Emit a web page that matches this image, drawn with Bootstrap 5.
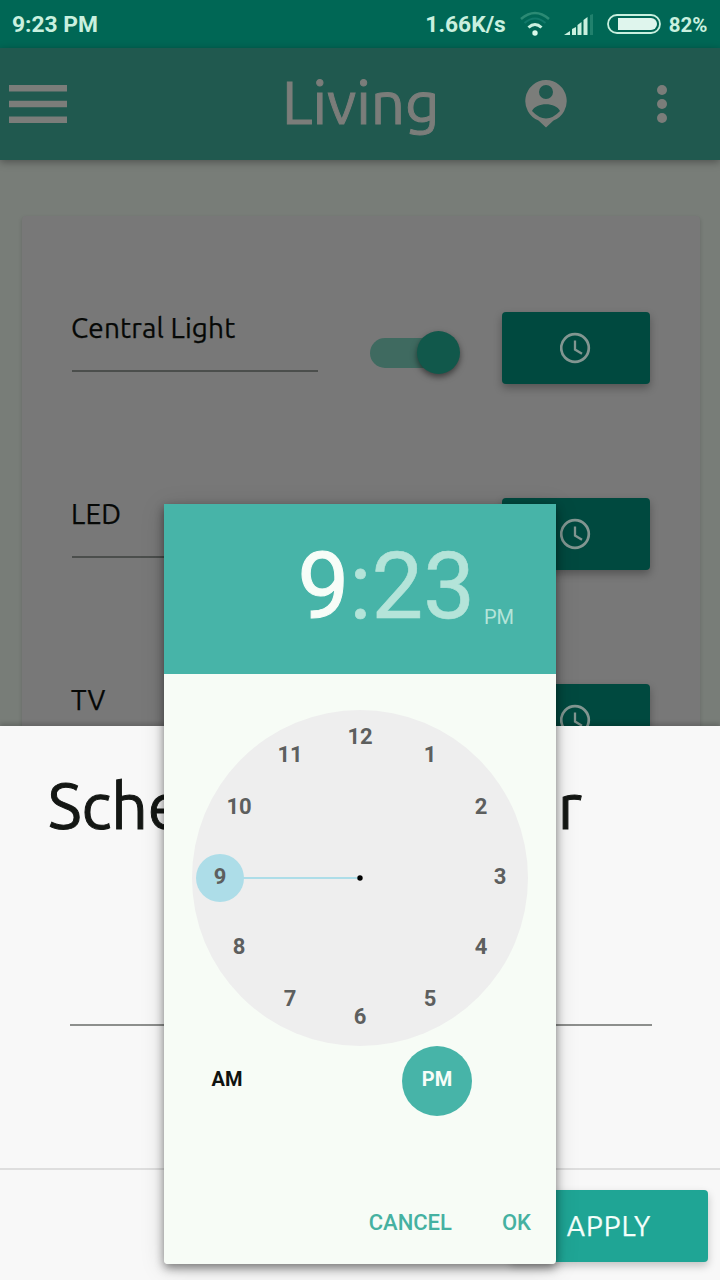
<!DOCTYPE html>
<html lang="en">
<head>
<meta charset="utf-8">
<meta name="viewport" content="width=device-width, initial-scale=1">
<title>Living</title>
<link href="https://cdn.jsdelivr.net/npm/bootstrap@5.3.0/dist/css/bootstrap.min.css" rel="stylesheet">
<style>
body{background:#787d78;font-family:Ubuntu,"Noto Sans",sans-serif;color:#060806;overflow:hidden}
.screen{width:720px;height:1280px}
.statusbar{height:48px;background:#006755;color:#c9f0df;font:700 22.800px/1 Roboto,sans-serif;padding:2px 12.500px 0 12px}
.battery-level{font-size:20.500px;margin-left:8px}
.icon-wifi{margin:-6px 0 0 9px}
.icon-signal{margin-left:8px}
.icon-battery{margin:-3px 0 0 13px}
.appbar{height:112px;background:#20594f;color:#7b7d7a;padding:0;box-shadow:0 2px 8px rgba(0,0,0,.35)}
.menu-icon{margin-left:9px}
.app-title{font-size:60px;line-height:1;margin-left:215px;width:156px;white-space:nowrap;margin-top:-5px;-webkit-text-stroke:1px currentColor}
.icon-person{margin-left:87px}
.icon-more{margin-left:90px}
.room{margin:56px 20px 0 22px;height:524px;background:#787878;border-radius:4px;box-shadow:0 2px 4px rgba(0,0,0,.17);padding:96px 50px 0}
.device{height:186px}
.device-name{width:246px;height:60px;border-bottom:2px solid #4b4e4c;font-size:28px;letter-spacing:.15px;line-height:1;padding-top:2px;text-indent:-1px;white-space:nowrap;-webkit-text-stroke:.25px currentColor}
.toggle{width:90px;height:44px;margin-left:52px;margin-top:19px}
.track{position:absolute;left:0;top:7px;width:80px;height:30px;border-radius:15px;background:#3f6a60}
.thumb{position:absolute;right:0;top:0;width:43px;height:43px;border-radius:50%;background:#11584b;box-shadow:0 3px 6px rgba(0,0,0,.5)}
.btn-clock{width:148px;height:72px;margin-left:42px;background:#00493f;border:0;border-radius:4px;box-shadow:0 4px 8px rgba(0,0,0,.3);color:#829691}
.sheet{left:0;top:726px;width:720px;height:554px;background:#f8f8f8;box-shadow:0 -3px 4px rgba(0,0,0,.15)}
.sheet-body{height:442px;padding:44px 48px 0}
.sheet-title{font-size:64px;line-height:1.1;color:#141714;white-space:nowrap;margin:0;height:254px;padding-right:90px;-webkit-text-stroke:1px currentColor}
.sheet-line{height:2px;background:#8d8f8d;margin:0 20px 0 22px}
.sheet-foot{border-top:2px solid #dedede;height:112px;padding:20px 12px 0}
.btn-apply{width:198px;height:72px;background:#1fa595;color:#f4fffb;border:0;border-radius:4px;font-size:28px;letter-spacing:1px;box-shadow:0 4px 8px rgba(0,0,0,.22);padding:0;-webkit-text-stroke:.25px currentColor}
.picker{left:164px;top:504px;width:392px;height:760px;background:#f7fcf6;border-radius:0 0 4px 4px;overflow:hidden;font-family:Roboto,sans-serif}
.picker-shadow{left:164px;top:504px;width:392px;height:760px;border-radius:0 0 4px 4px;box-shadow:0 4px 10px rgba(0,0,0,.45),0 4px 24px rgba(0,0,0,.15)}
.picker-head{height:170px;background:#47b4a8;color:#b4e4d9;padding:0 42px 0 0}
.time{font-size:92px;line-height:1;margin-top:-4px;-webkit-text-stroke:.6px currentColor}
.hour{color:#f7fdf8;-webkit-text-stroke-width:1px}
.meridiem{font-size:20px;line-height:1;margin-left:9px;margin-bottom:47px}
.dial{width:336px;height:336px;margin:36px auto 0}
.dial text{font:700 22px Roboto,sans-serif;fill:#5d5f5e;text-anchor:middle}
.halves{padding:0 84px 0 28px}
.half{width:70px;height:70px;border-radius:50%;font-size:20px;font-weight:700;line-height:1;padding-bottom:4px;color:#101310}
.half.chosen{background:#47b4a8;color:#f7fdf8}
.actions{font-size:22px;font-weight:500;line-height:1;color:#45b1a1;padding-right:25px;gap:50px;margin-top:96px}
</style>
</head>
<body>
<div class="screen position-relative overflow-hidden">
  <header class="statusbar d-flex align-items-center">
    <span class="me-auto">9:23 PM</span>
    <span>1.66K/s</span>
    <svg class="icon-wifi" width="40" height="30" viewBox="0 0 40 30"><g fill="none"><path d="M6 12Q20 0 34 12" stroke="#2b8a74" stroke-width="2.500"/><path d="M9.500 16Q20 7 30.500 16" stroke="#12796a" stroke-width="2"/><path d="M13.500 20.500Q20 14.500 26.500 20.500" stroke="#c9f0df" stroke-width="3"/></g><circle cx="20" cy="26" r="2.700" fill="#d9faeb"/></svg>
    <svg class="icon-signal" width="31" height="22" viewBox="0 0 31 22"><path d="M1 21l6-4v4zM9 15l4-2v8H9zM14.500 11l4-3v13h-4zM20.500 6l4-3v18h-4z" fill="#c9f0df"/><path d="M27 1l3-1v21h-3z" fill="#21816d"/></svg>
    <svg class="icon-battery" width="54" height="20" viewBox="0 0 54 20"><rect x="1" y="1" width="52" height="18" rx="9" fill="none" stroke="#c9f0df" stroke-width="1.800"/><path d="M11 4h33a6 6 0 010 12H11z" fill="#dff5ed"/></svg>
    <span class="battery-level">82%</span>
  </header>

  <nav class="appbar navbar d-flex flex-nowrap justify-content-start position-relative">
    <svg class="menu-icon" width="58" height="38" viewBox="0 0 58 38"><path d="M0 0h58v6.500H0zM0 15.700h58v6.500H0zM0 31.400h58v6.500H0z" fill="currentColor"/></svg>
    <div class="app-title">Living</div>
    <svg class="icon-person" width="42" height="48" viewBox="0 0 42 48"><path fill="currentColor" fill-rule="evenodd" d="M21 0a21 21 0 0 1 7.500 40.500L21 47.500l-7.500-7A21 21 0 0 1 21 0zm0 5a7 7 0 1 0 0 14 7 7 0 0 0 0-14zM7 31q14 15 28 0c-4-9-24-9-28 0z"/></svg>
    <svg class="icon-more" width="10" height="38" viewBox="0 0 10 38"><g fill="currentColor"><circle cx="5" cy="5" r="5"/><circle cx="5" cy="19" r="5"/><circle cx="5" cy="33" r="5"/></g></svg>
  </nav>

  <main class="room">
    <div class="device d-flex align-items-start">
      <div class="device-name">Central Light</div>
      <div class="toggle position-relative"><div class="track"></div><div class="thumb"></div></div>
      <button class="btn btn-clock d-flex align-items-center justify-content-center" aria-label="Schedule"><svg width="32" height="32" viewBox="0 0 32 32" fill="none" stroke="currentColor"><circle cx="15" cy="16" r="13.800" stroke-width="2.700"/><path d="M15 8.500v9l7 4.200" stroke-width="2.300"/></svg></button>
    </div>
    <div class="device d-flex align-items-start">
      <div class="device-name">LED</div>
      <div class="toggle position-relative"><div class="track"></div><div class="thumb"></div></div>
      <button class="btn btn-clock d-flex align-items-center justify-content-center" aria-label="Schedule"><svg width="32" height="32" viewBox="0 0 32 32" fill="none" stroke="currentColor"><circle cx="15" cy="16" r="13.800" stroke-width="2.700"/><path d="M15 8.500v9l7 4.200" stroke-width="2.300"/></svg></button>
    </div>
    <div class="device d-flex align-items-start">
      <div class="device-name">TV</div>
      <div class="toggle position-relative"><div class="track"></div><div class="thumb"></div></div>
      <button class="btn btn-clock d-flex align-items-center justify-content-center" aria-label="Schedule"><svg width="32" height="32" viewBox="0 0 32 32" fill="none" stroke="currentColor"><circle cx="15" cy="16" r="13.800" stroke-width="2.700"/><path d="M15 8.500v9l7 4.200" stroke-width="2.300"/></svg></button>
    </div>
  </main>

  <section class="sheet position-absolute">
    <div class="sheet-body">
      <h1 class="sheet-title fw-normal d-flex justify-content-between"><span>Sche</span><span>r</span></h1>
      <div class="sheet-line"></div>
    </div>
    <div class="sheet-foot d-flex justify-content-end"><button class="btn btn-apply">APPLY</button></div>
  </section>

  <div class="picker-shadow position-absolute"></div>
  <section class="picker position-absolute">
    <div class="picker-head d-flex align-items-center justify-content-end">
      <div class="time"><span class="hour">9</span>:23</div>
      <div class="meridiem align-self-end">PM</div>
    </div>
    <div class="dial">
      <svg class="d-block" width="336" height="336" viewBox="0 0 336 336">
        <circle cx="168" cy="168" r="168" fill="#eee"/>
        <path d="M28 168H168" stroke="#addde8" stroke-width="2"/>
        <circle cx="28" cy="168" r="24" fill="#addde8"/>
        <circle cx="168" cy="168" r="2.700" fill="#000"/>
        <text x="168" y="34">12</text><text x="238" y="52">1</text><text x="289" y="104">2</text><text x="308" y="174">3</text><text x="289" y="244">4</text><text x="238" y="296">5</text><text x="168" y="314">6</text><text x="98" y="296">7</text><text x="47" y="244">8</text><text x="28" y="174">9</text><text x="47" y="104">10</text><text x="98" y="52">11</text>
      </svg>
    </div>
    <div class="halves d-flex justify-content-between">
      <div class="half d-flex align-items-center justify-content-center">AM</div>
      <div class="half chosen d-flex align-items-center justify-content-center">PM</div>
    </div>
    <div class="actions d-flex justify-content-end"><span>CANCEL</span><span>OK</span></div>
  </section>
</div>
<script src="https://cdn.jsdelivr.net/npm/bootstrap@5.3.0/dist/js/bootstrap.bundle.min.js"></script>
</body>
</html>
